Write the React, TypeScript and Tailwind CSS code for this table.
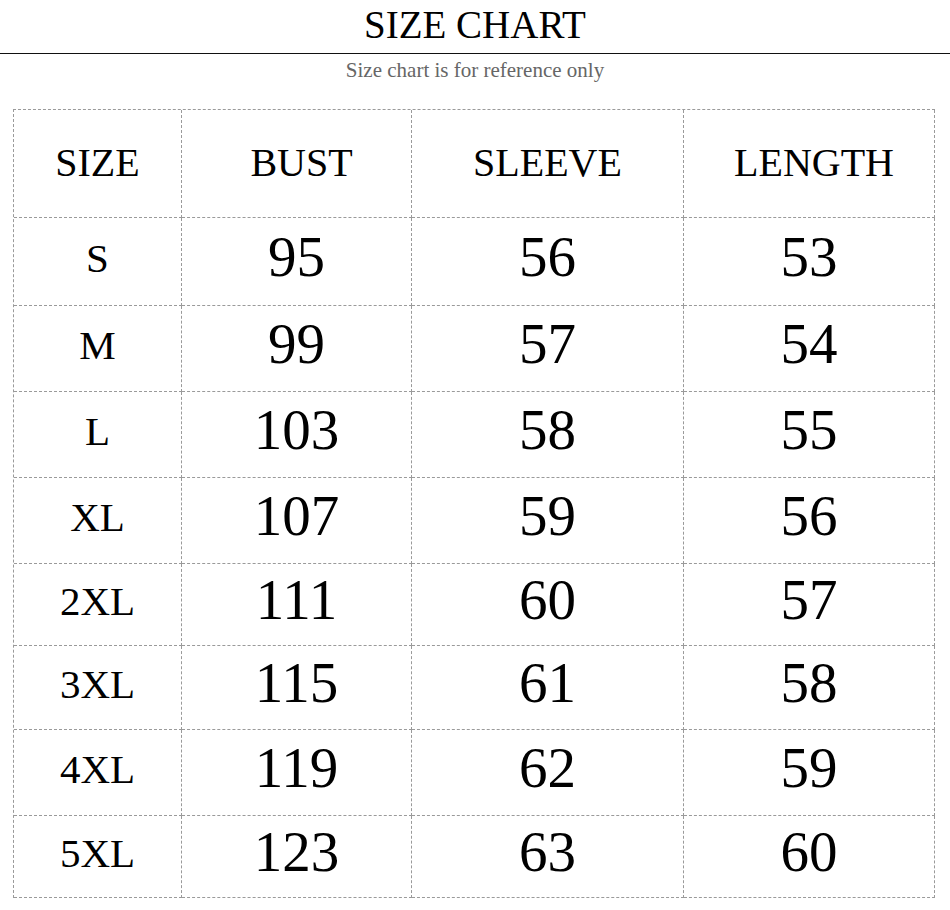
import React from "react";

const serif = { fontFamily: '"Liberation Serif", "Times New Roman", serif' };

const rows = [
  { size: "S", bust: "95", sleeve: "56", length: "53", h: "h-[88px]" },
  { size: "M", bust: "99", sleeve: "57", length: "54", h: "h-[86px]" },
  { size: "L", bust: "103", sleeve: "58", length: "55", h: "h-[86px]" },
  { size: "XL", bust: "107", sleeve: "59", length: "56", h: "h-[86px]" },
  { size: "2XL", bust: "111", sleeve: "60", length: "57", h: "h-[82px]" },
  { size: "3XL", bust: "115", sleeve: "61", length: "58", h: "h-[84px]" },
  { size: "4XL", bust: "119", sleeve: "62", length: "59", h: "h-[86px]" },
  { size: "5XL", bust: "123", sleeve: "63", length: "60", h: "h-[82px]" },
];

const cell =
  "flex items-center justify-center border-r border-b border-dashed border-[#9a9a9a] leading-none";

export default function App() {
  return (
    <div className="w-[950px] h-[910px] bg-white text-black overflow-hidden" style={serif}>
      <div className="pt-[5px] pb-[9px] border-b border-[#111] text-center">
        <h1 className="text-[39px] leading-none font-normal">SIZE CHART</h1>
      </div>
      <p className="mt-[6px] text-center text-[21px] leading-none text-[#666]">
        Size chart is for reference only
      </p>

      <div className="mt-[28px] ml-[13px] w-[922px] grid grid-cols-[168px_230px_272px_251px] border-l border-t border-dashed border-[#9a9a9a]">
        <div className={`${cell} h-[108px] text-[40px] pb-[2px]`}>SIZE</div>
        <div className={`${cell} h-[108px] text-[40px] pb-[2px] pl-[10px]`}>BUST</div>
        <div className={`${cell} h-[108px] text-[40px] pb-[2px]`}>SLEEVE</div>
        <div className={`${cell} h-[108px] text-[40px] pb-[2px] pl-[10px]`}>LENGTH</div>

        {rows.map((r) => (
          <React.Fragment key={r.size}>
            <div className={`${cell} ${r.h} text-[41px] pb-[6px]`}>{r.size}</div>
            <div className={`${cell} ${r.h} text-[57px] pb-[10px]`}>{r.bust}</div>
            <div className={`${cell} ${r.h} text-[57px] pb-[10px]`}>{r.sleeve}</div>
            <div className={`${cell} ${r.h} text-[57px] pb-[10px]`}>{r.length}</div>
          </React.Fragment>
        ))}
      </div>
    </div>
  );
}
